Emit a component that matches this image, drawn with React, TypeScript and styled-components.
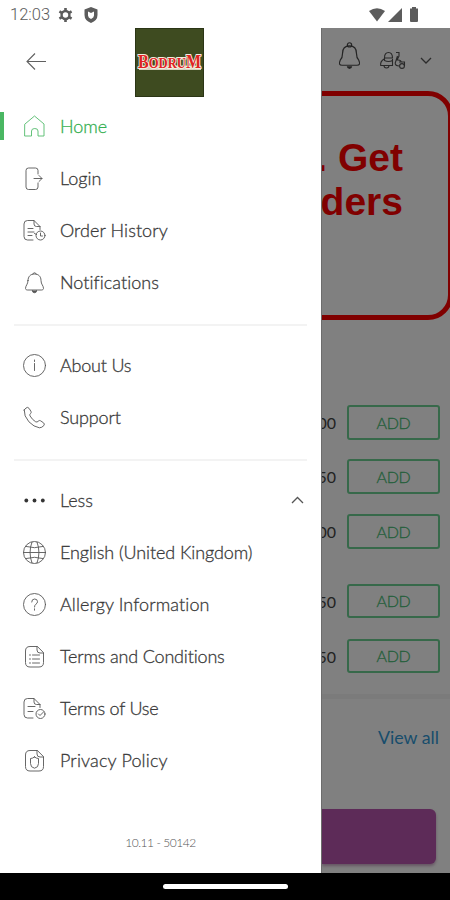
import React from "react";
import styled, { createGlobalStyle } from "styled-components";

const Global = createGlobalStyle`
  * { box-sizing: border-box; }
  body { margin: 0; background: #fff; font-family: Lato, sans-serif; }
  svg { flex: none; }
`;

const Screen = styled.div`
  width: 450px;
  height: 900px;
  display: flex;
  flex-direction: column;
  overflow: hidden;
  background: #fff;
`;

const StatusBar = styled.header`
  height: 28px;
  flex: none;
  display: flex;
  align-items: center;
  padding: 1px 27px 0 10px;
  color: #5c5c5c;
`;

const Clock = styled.span`
  width: 48px;
  font: 300 16.5px/20px Roboto, sans-serif;
  color: #5c5c5c;
`;

const StatusIcons = styled.div<{ $end?: boolean }>`
  display: flex;
  align-items: center;
  gap: ${(p) => (p.$end ? 3 : 11)}px;
  margin-left: ${(p) => (p.$end ? "auto" : "0")};
`;

const Body = styled.div`
  height: 845px;
  flex: none;
  display: flex;
`;

const Drawer = styled.nav`
  width: 321px;
  flex: none;
  display: flex;
  flex-direction: column;
  background: #fff;
  color: #444;
`;

const DrawerHead = styled.div`
  height: 72px;
  flex: none;
  display: flex;
  align-items: flex-start;
`;

const BackButton = styled.div`
  width: 135px;
  height: 67px;
  padding-left: 25px;
  display: flex;
  align-items: center;
`;

const Logo = styled.div`
  width: 69px;
  height: 69px;
  background: #3e4b20;
  border: 1px solid #2b3516;
  display: flex;
  align-items: center;
`;

const Item = styled.a<{ $active?: boolean }>`
  height: 52px;
  display: flex;
  align-items: center;
  padding-right: 15px;
  color: ${(p) => (p.$active ? "#36b052" : "#3a3a3a")};
`;

const Marker = styled.span<{ $active?: boolean }>`
  width: 4px;
  height: 28px;
  margin-right: 18px;
  background: ${(p) => (p.$active ? "#4ab763" : "transparent")};
`;

const IconSlot = styled.span`
  width: 38px;
  height: 26px;
  display: flex;
  align-items: center;
  opacity: 0.85;
`;

const Label = styled.span<{ $tracking: number }>`
  flex: 1;
  font-size: 18px;
  font-weight: 300;
  line-height: 24px;
  letter-spacing: ${(p) => p.$tracking}px;
  font-variant-ligatures: none;
  -webkit-text-stroke: 0.3px currentColor;
  white-space: nowrap;
`;

const Divider = styled.hr`
  width: 293px;
  height: 2px;
  flex: none;
  border: 0;
  margin: 16px 0 13px 14px;
  background: #f3f3f3;
`;

const Version = styled.div`
  margin-top: 48px;
  text-align: center;
  font-size: 12px;
  font-weight: 300;
  letter-spacing: -0.45px;
  line-height: 18px;
  color: #555;
`;

const Page = styled.main`
  width: 129px;
  flex: none;
  display: flex;
  flex-direction: column;
  overflow: hidden;
  background: #808080;
  border-left: 1px solid #6d6d6d;
`;

const Toolbar = styled.div`
  height: 63px;
  flex: none;
  display: flex;
  align-items: center;
  padding: 1px 17px 0 15px;
`;

const BellSlot = styled.div`
  width: 43px;
  height: 39px;
`;

const ModeSlot = styled.div`
  width: 41px;
  height: 19px;
`;

const Banner = styled.div`
  width: 180px;
  height: 229px;
  flex: none;
  align-self: flex-end;
  margin-right: -3px;
  padding: 40px 45px 0 0;
  border: 5px solid #800000;
  border-radius: 25px;
  display: flex;
  flex-direction: column;
  align-items: flex-end;
  color: #800000;
  font: 700 39px/44px "Liberation Sans", Arial, sans-serif;
  white-space: nowrap;
`;

const Products = styled.div`
  height: 379px;
  flex: none;
  padding-top: 85px;
  display: flex;
  flex-direction: column;
  border-bottom: 5px solid #7b7b7b;
`;

const Product = styled.div<{ $gap?: number; $h?: number }>`
  height: ${(p) => p.$h ?? 35}px;
  margin-bottom: ${(p) => p.$gap ?? 20}px;
  display: flex;
  align-items: stretch;
  justify-content: flex-end;
  gap: 11px;
  padding-right: 10px;
  line-height: 35px;
`;

const Price = styled.span`
  font-size: 16px;
  color: #222;
`;

const AddButton = styled.div`
  width: 93px;
  flex: none;
  display: flex;
  align-items: center;
  justify-content: center;
  border: 2px solid #37694a;
  border-radius: 3px;
  color: #245f3b;
  font-size: 16px;
  font-weight: 300;
  letter-spacing: -0.3px;
  -webkit-text-stroke: 0.3px currentColor;
  line-height: 20px;
`;

const ViewAll = styled.a`
  height: 24px;
  margin: 26px 11px 0 0;
  text-align: right;
  font-size: 17.8px;
  line-height: 24px;
  color: #174d6c;
`;

const Basket = styled.div`
  width: 114px;
  height: 55px;
  flex: none;
  margin-top: 60px;
  border-radius: 0 6px 6px 0;
  background: #5d2b58;
  box-shadow: 0 2px 3px rgba(70, 30, 65, 0.45);
`;

const SystemNav = styled.footer`
  flex: 1;
  background: #000;
  display: flex;
  align-items: center;
  justify-content: center;
`;

const HomePill = styled.div`
  width: 125px;
  height: 5px;
  border-radius: 3px;
  background: #fff;
`;

const strokes: Record<string, React.ReactNode> = {
  home: <path d="M3 10 12.5 2 22 10v12h-6v-5q0-2.5-3.2-2.5T9.500 17v5H3Z" />,
  login: (
    <>
      <path d="M16 8V4.500q0-2.500-2.500-2.500H6.500Q4 2 4 4.500v16.500q0 2.500 2.500 2.500h7q2.500 0 2.500-2.500v-4" />
      <path d="M12 12.500h8m-3-3 3 3-3 3" />
    </>
  ),
  history: (
    <>
      <path d="M11 22H5.500Q2 22 2 18.500V6q0-3.500 3.500-3.500H12l6 6v3M12 2.500V6q0 2.500 2.500 2.500H18M6 10.500h5m-5 3.500h6m-6 3.500h4" />
      <circle cx="18.500" cy="17.500" r="4.500" />
      <path d="M18.500 15v3h2M12.500 15.500l2 1" />
    </>
  ),
  bell: (
    <>
      <path d="M10.800 4a1.800 1.800 0 0 1 3.400 0M6 10.500C6 6.500 8.500 4 12.500 4S19 6.500 19 10.500c0 4 2.500 5 2.500 8 0 1-1 1.500-2 1.500h-14c-1 0-2-.5-2-1.500 0-3 2.500-4 2.500-8Z" />
      <path d="M10.300 20.500a2.200 2.200 0 0 0 4.400 0" fill="currentColor" />
    </>
  ),
  info: (
    <>
      <circle cx="12.500" cy="12.500" r="11" />
      <path d="M12.500 10.500v7M12.500 7v1.500" />
    </>
  ),
  phone: (
    <path d="M2.200 5 4 3q1.800-1.400 3 .3l1.900 2.900q.8 1.300-.4 2.400-1.200 1-.5 2.300 2.400 4 5.700 5.900 1.500.7 2.500-.6 1.100-1.200 2.400-.4l2.900 2q1.500 1.200.4 2.700-2 2.300-4.500 2.300-5.500-.8-10.500-6Q1.700 11 2.200 5Z" />
  ),
  globe: (
    <>
      <circle cx="12.500" cy="12.500" r="11" />
      <path d="M1.500 12.500h22M4 6.500q8.500 2.500 17 0M4 18.500q8.500-2.500 17 0M10 2Q6 12.500 10 23M15 2q4 10.500 0 21" />
    </>
  ),
  help: (
    <>
      <circle cx="12.500" cy="12.500" r="11" />
      <path d="M9.700 10q0-3 2.900-3t2.900 2.700q0 1.500-1.600 2.500-1.400 1-1.400 2.800m0 1.800v1.400" />
    </>
  ),
  terms: (
    <>
      <path d="M15 2.500H8Q3.500 2.500 3.500 7v11.500Q3.500 23 8 23h9q4.500 0 4.500-4.500V9Zm0 0V6q0 3 3 3h3.500" />
      <path d="M7.500 11h1m2 0h7m-10 4h1m2 0h7m-10 4h1m2 0h7" />
    </>
  ),
  use: (
    <>
      <path d="M11 22H5.500Q2 22 2 18.500V6q0-3.500 3.500-3.500H12l6 6v3M12 2.500V6q0 2.500 2.500 2.500H18M6 10.500h7m-7 5h5" />
      <circle cx="18.500" cy="18" r="4.500" />
      <path d="m16.500 18 1.500 1.500 3.500-3.500" />
    </>
  ),
  privacy: (
    <>
      <path d="M15 2.500H8Q3.500 2.500 3.500 7v11.500Q3.500 23 8 23h9q4.500 0 4.500-4.500V9Zm0 0V6q0 3 3 3h3.500" />
      <path d="M12.500 9q2 1.500 4 1.500v5q0 4-4 4.700-4-.7-4-4.700v-5q2 0 4-1.500Z" />
    </>
  ),
};

function Icon({ name }: { name: string }) {
  if (name === "dots")
    return (
      <svg width="25" height="25" viewBox="0 0 25 25" fill="#111">
        <circle cx="4.300" cy="12.500" r="1.900" />
        <circle cx="12.500" cy="12.500" r="1.900" />
        <circle cx="20.800" cy="12.500" r="1.900" />
      </svg>
    );
  return (
    <svg
      width="25"
      height="25"
      viewBox="0 0 25 25"
      fill="none"
      stroke="currentColor"
      strokeWidth="0.900"
      strokeLinejoin="round"
      strokeLinecap="round"
    >
      {strokes[name]}
    </svg>
  );
}

interface EntryProps {
  icon: string;
  text: string;
  tracking?: number;
  active?: boolean;
  open?: boolean;
}

function Entry({ icon, text, tracking = 0, active, open }: EntryProps) {
  return (
    <Item $active={active}>
      <Marker $active={active} />
      <IconSlot>
        <Icon name={icon} />
      </IconSlot>
      <Label $tracking={tracking}>{text}</Label>
      {open && (
        <svg width="16" height="10" viewBox="0 0 16 10" fill="none" stroke="#555" strokeWidth="1.300">
          <path d="m2 8 5.500-5.500L13 8" />
        </svg>
      )}
    </Item>
  );
}

const products: { price: string; gap?: number; height?: number }[] = [
  { price: "00", gap: 19 },
  { price: "50", gap: 20 },
  { price: "00", gap: 35 },
  { price: "50", height: 34, gap: 21 },
  { price: "50", height: 34 },
];

export default function App() {
  return (
    <>
      <Global />
      <Screen>
        <StatusBar>
          <Clock>12:03</Clock>
          <StatusIcons>
            <svg width="15" height="16" viewBox="0 0 16 16" fill="none" stroke="currentColor">
              <circle cx="8" cy="8" r="4.200" strokeWidth="2.600" />
              <path d="M8 .5v3m0 9v3M1.500 4.250l2.600 1.500m7.800 4.500 2.600 1.500M1.500 11.750l2.600-1.500m7.800-4.500 2.600-1.500" strokeWidth="2.800" />
            </svg>
            <svg width="14" height="16" viewBox="0 0 14 16" fill="currentColor">
              <path fillRule="evenodd" d="M7 0 13.500 2.500V8q0 5.500-6.500 8Q.5 13.500.5 8V2.500ZM4 4.500v4q0 2 3 3.500 3-1.500 3-3.500v-4L7 6Z" />
            </svg>
          </StatusIcons>
          <StatusIcons $end>
            <svg width="16" height="14" viewBox="0 0 16 14" fill="currentColor">
              <path d="M0 3Q8-2.500 16 3L8 13.500Z" />
            </svg>
            <svg width="14" height="14" viewBox="0 0 14 14" fill="currentColor">
              <path d="M14 0v14H0Z" />
            </svg>
            <svg width="18" height="15" viewBox="0 0 18 15" fill="currentColor">
              <path d="M7 0h4v1.500h2V14q0 1-1 1H6q-1 0-1-1V1.500h2Z" />
            </svg>
          </StatusIcons>
        </StatusBar>
        <Body>
          <Drawer>
            <DrawerHead>
              <BackButton>
                <svg width="22" height="19" viewBox="0 0 22 19" fill="none" stroke="#606060" strokeWidth="1.100">
                  <path d="M21 9.500H2M10 1.500l-8 8 8 8" />
                </svg>
              </BackButton>
              <Logo>
                <svg width="67" height="24" viewBox="0 0 67 24">
                  <path d="M3 14.500h62v4.500H3Z" fill="#d5d0be" />
                  <text
                    x="2"
                    y="17"
                    textLength="63"
                    lengthAdjust="spacingAndGlyphs"
                    fontFamily="Liberation Serif, serif"
                    fontWeight="700"
                    fontSize="15"
                    fill="#df2423"
                    stroke="#f3eddf"
                    strokeWidth="2"
                    paintOrder="stroke"
                  >
                    <tspan fontSize="19">B</tspan>
                    <tspan>ODRU</tspan>
                    <tspan fontSize="19">M</tspan>
                  </text>
                </svg>
              </Logo>
            </DrawerHead>
            <Entry icon="home" text="Home" active />
            <Entry icon="login" text="Login" />
            <Entry icon="history" text="Order History" tracking={0.08} />
            <Entry icon="bell" text="Notifications" tracking={0.05} />
            <Divider />
            <Entry icon="info" text="About Us" tracking={-0.2} />
            <Entry icon="phone" text="Support" tracking={-0.15} />
            <Divider />
            <Entry icon="dots" text="Less" open />
            <Entry icon="globe" text="English (United Kingdom)" tracking={-0.09} />
            <Entry icon="help" text="Allergy Information" tracking={0.11} />
            <Entry icon="terms" text="Terms and Conditions" tracking={-0.17} />
            <Entry icon="use" text="Terms of Use" tracking={-0.24} />
            <Entry icon="privacy" text="Privacy Policy" tracking={0.16} />
            <Version>10.11 - 50142</Version>
          </Drawer>
          <Page>
            <Toolbar>
              <BellSlot>
                <svg width="25" height="30" viewBox="0 0 27 32" fill="none" stroke="#242424" strokeWidth="1.300">
                  <circle cx="13.500" cy="4" r="2.300" />
                  <path d="M6 13q0-8 7.500-8T21 13q0 5 2.500 7.500Q26 26 21.500 26h-16Q1 26 3.500 20.500 6 18 6 13Z" />
                  <path d="M10.500 27h6q-.5 3-3 3t-3-3Z" fill="#242424" stroke="none" />
                </svg>
              </BellSlot>
              <ModeSlot>
                <svg width="27" height="19" viewBox="0 0 27 19" fill="none" stroke="#292929" strokeWidth="1.100">
                  <path d="M5.500 7q0-5.500 4-5.500t4 5.500ZM5.500 7v2.500q4 2 8 0M5 8Q1 10.500 1.700 14.500h11.800V8M5 14.500a2.200 2.200 0 0 0 5 0" />
                  <path d="M17 1.500h3v3.500l-2 4q4-.500 4.500 2.500M18.500 5l-2.300 7q0 3 4 3M20 11h5.500v4" />
                  <circle cx="23" cy="15" r="2.400" />
                </svg>
              </ModeSlot>
              <svg width="14" height="9" viewBox="0 0 14 9" fill="none" stroke="#2c2c2c" strokeWidth="1.300">
                <path d="m2 2 5 5 5-5" />
              </svg>
            </Toolbar>
            <Banner>
              <span>. Get</span>
              <span>ders</span>
            </Banner>
            <Products>
              {products.map((p, i) => (
                <Product key={i} $gap={p.gap} $h={p.height}>
                  <Price>{p.price}</Price>
                  <AddButton>ADD</AddButton>
                </Product>
              ))}
            </Products>
            <ViewAll>View all</ViewAll>
            <Basket />
          </Page>
        </Body>
        <SystemNav>
          <HomePill />
        </SystemNav>
      </Screen>
    </>
  );
}
